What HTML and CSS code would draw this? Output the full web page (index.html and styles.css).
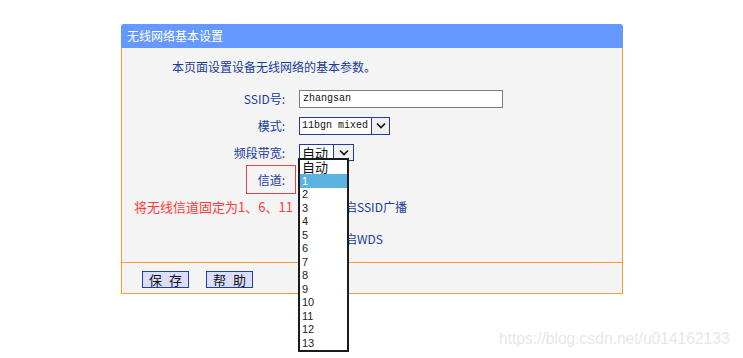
FILE: index.html
```html
<!DOCTYPE html>
<html lang="zh-CN">
<head>
  <meta charset="UTF-8">
  <title>无线网络基本设置</title>
  <link rel="stylesheet" href="styles.css">
</head>
<body>
  <div class="page">
    <div class="panel">
      <div class="panel-title">无线网络基本设置</div>

      <!-- 基本设置 -->
      <div class="panel-body">
        <p class="intro">本页面设置设备无线网络的基本参数。</p>
        <div class="form">
          <div class="form-label">SSID号:</div>
          <div class="form-field"><div class="textbox">zhangsan</div></div>

          <div class="form-label">模式:</div>
          <div class="form-field">
            <div class="select select-mode">
              <span class="select-value mono">11bgn mixed</span>
              <span class="select-arrow"><svg width="10" height="7" viewBox="0 0 10 7"><path d="M1 1.5 L5 5.5 L9 1.5" fill="none" stroke="#111" stroke-width="1.6"/></svg></span>
            </div>
          </div>

          <div class="form-label">频段带宽:</div>
          <div class="form-field">
            <div class="select select-band">
              <span class="select-value big">自动</span>
              <span class="select-arrow"><svg width="10" height="7" viewBox="0 0 10 7"><path d="M1 1.5 L5 5.5 L9 1.5" fill="none" stroke="#111" stroke-width="1.6"/></svg></span>
              <!-- 展开的信道列表 -->
              <ul class="dropdown">
                <li class="big">自动</li>
                <li class="active">1</li>
                <li>2</li>
                <li>3</li>
                <li>4</li>
                <li>5</li>
                <li>6</li>
                <li>7</li>
                <li>8</li>
                <li>9</li>
                <li>10</li>
                <li>11</li>
                <li>12</li>
                <li>13</li>
              </ul>
            </div>
          </div>

          <div class="form-label"><span class="mark-box">信道:</span></div>
          <div class="form-field">
            <div class="select select-channel"></div>
          </div>

          <div class="form-label note">将无线信道固定为1、6、11</div>
          <div class="form-field check"><span class="checkbox"></span>开启SSID广播</div>

          <div class="form-label"></div>
          <div class="form-field check"><span class="checkbox"></span>开启WDS</div>
        </div>
      </div>

      <div class="panel-foot">
        <button class="btn">保 存</button>
        <button class="btn">帮 助</button>
      </div>
    </div>

    <div class="watermark">https://blog.csdn.net/u014162133</div>
  </div>
</body>
</html>
```

FILE: styles.css
```css
* {
  box-sizing: border-box;
  margin: 0;
  padding: 0;
}
body {
  background: #fff;
  font-family: "SimSun", "Noto Sans CJK SC", sans-serif;
  font-size: 12px;
  color: #173c9b;
}
.page {
  position: relative;
  height: 358px;
  padding: 24px 0 0 121px;
  overflow: hidden;
}
.panel {
  width: 502px;
}
.panel-title {
  height: 24px;
  line-height: 24px;
  padding-left: 6px;
  background: #6699ff;
  color: #fff;
  border-radius: 3px 3px 0 0;
}
/* 设置区域 */
.panel-body {
  background: #f4f4f4;
  border-left: 1px solid #ff9933;
  border-right: 1px solid #ff9933;
  border-bottom: 1px solid #ff9933;
  padding: 10px 0 6px;
}
.intro {
  line-height: 18px;
  padding-left: 50px;
  margin-bottom: 9px;
}
.form {
  display: grid;
  grid-template-columns: 163px 1fr;
  grid-template-rows: repeat(5, 27px) 36px;
  column-gap: 14px;
  align-items: center;
}
.form-label {
  text-align: right;
  white-space: nowrap;
}
.form-field {
  display: flex;
  align-items: center;
}
.mono {
  font-family: "Liberation Mono", "Noto Sans CJK SC", monospace;
  font-size: 10px;
  color: #111;
}
.big {
  font-size: 13px;
  color: #111;
}
.textbox {
  width: 204px;
  height: 18px;
  line-height: 16px;
  padding-left: 3px;
  background: #fff;
  border: 1px solid #7a7a7a;
  font-family: "Liberation Mono", monospace;
  font-size: 10px;
  color: #111;
}
/* 下拉框 */
.select {
  position: relative;
  display: flex;
  background: #fff;
  border: 1px solid #1e3e9e;
}
.select-value {
  flex: 1;
  padding-left: 2px;
  line-height: 15px;
}
.select-arrow {
  display: flex;
  align-items: center;
  justify-content: center;
  border-left: 1px solid #1e3e9e;
  background: #f0f0f0;
}
.select-mode {
  width: 91px;
  height: 18px;
}
.select-mode .select-arrow {
  width: 18px;
}
.select-band {
  width: 55px;
  height: 17px;
}
.select-band .select-arrow {
  width: 20px;
}
.select-channel {
  width: 40px;
  height: 18px;
}
.dropdown {
  position: absolute;
  top: 13px;
  left: -2px;
  width: 51px;
  list-style: none;
  background: #fff;
  border: 2px solid #1c1c1c;
  z-index: 2;
}
.dropdown li {
  height: 13.5px;
  line-height: 13.5px;
  padding-left: 2px;
  font-family: "Liberation Sans", sans-serif;
  font-size: 11px;
  color: #222;
}
.dropdown li.big {
  height: 14px;
  line-height: 14px;
  font-family: "SimSun", "Noto Sans CJK SC", sans-serif;
  font-size: 13px;
  color: #111;
}
.dropdown li.active {
  height: 14px;
  line-height: 14px;
  background: #5cb3e0;
  color: #fff;
}
/* 标注 */
.mark-box {
  display: inline-block;
  padding: 5px 10px 5px 11px;
  margin-right: -11px;
  border: 1px solid #e04646;
}
.note {
  text-align: left;
  padding-left: 12px;
  font-size: 13px;
  color: #ff3b3b;
}
.check {
  padding-left: 14px;
}
.checkbox {
  width: 13px;
  height: 13px;
  margin-right: 7px;
  background: #fff;
  border: 1px solid #777;
}
/* 按钮区域 */
.panel-foot {
  display: flex;
  gap: 17px;
  height: 31px;
  padding: 8px 0 0 20px;
  background: #f4f4f4;
  border-left: 1px solid #ff9933;
  border-right: 1px solid #ff9933;
  border-bottom: 1px solid #ff9933;
}
.btn {
  width: 47px;
  height: 17px;
  background: #dcdcfc;
  border: 1px solid #1f3fa8;
  font-family: "SimSun", "Noto Sans CJK SC", sans-serif;
  font-size: 13px;
  line-height: 15px;
  word-spacing: 4px;
  color: #111;
}
.watermark {
  position: absolute;
  left: 499px;
  top: 330px;
  font-family: "Liberation Sans", Arial, sans-serif;
  font-size: 15.6px;
  color: #e8e8e8;
}
```
